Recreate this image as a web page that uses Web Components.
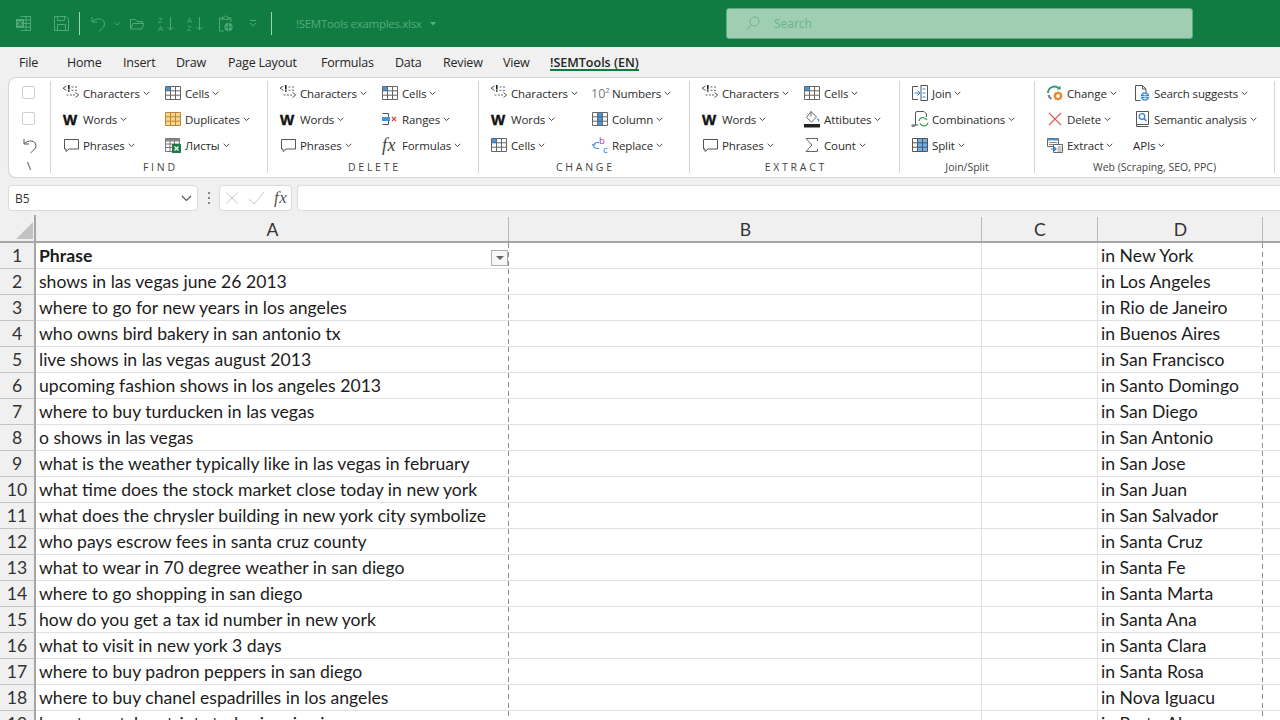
<!DOCTYPE html>
<html><head><meta charset="utf-8">
<style>
html,body{margin:0;padding:0;width:1280px;height:720px;overflow:hidden;background:#f0f0f0}
body{display:flex;flex-direction:column;font-family:"Open Sans","Noto Sans",sans-serif}
</style></head>
<body>
<x-titlebar></x-titlebar>
<x-tabs>
  <x-tab w="48" ml="19">File</x-tab><x-tab w="56">Home</x-tab><x-tab w="53">Insert</x-tab><x-tab w="52">Draw</x-tab><x-tab w="93">Page Layout</x-tab><x-tab w="74">Formulas</x-tab><x-tab w="48">Data</x-tab><x-tab w="60">Review</x-tab><x-tab w="47">View</x-tab><x-tab active>!SEMTools (EN)</x-tab>
</x-tabs>
<x-ribbon>
  <x-left></x-left>
  <x-group w="217" col="102" label="F I N D">
    <x-item icon="chars">Characters</x-item><x-item icon="grid">Cells</x-item>
    <x-item icon="w">Words</x-item><x-item icon="dup">Duplicates</x-item>
    <x-item icon="bubble">Phrases</x-item><x-item icon="sheets">Листы</x-item>
  </x-group>
  <x-group w="211" col="102" label="D E L E T E">
    <x-item icon="chars">Characters</x-item><x-item icon="grid">Cells</x-item>
    <x-item icon="w">Words</x-item><x-item icon="ranges">Ranges</x-item>
    <x-item icon="bubble">Phrases</x-item><x-item icon="fx">Formulas</x-item>
  </x-group>
  <x-group w="211" col="101" label="C H A N G E">
    <x-item icon="chars">Characters</x-item><x-item icon="ten">Numbers</x-item>
    <x-item icon="w">Words</x-item><x-item icon="column">Column</x-item>
    <x-item icon="grid">Cells</x-item><x-item icon="replace">Replace</x-item>
  </x-group>
  <x-group w="210" col="102" label="E X T R A C T">
    <x-item icon="chars">Characters</x-item><x-item icon="grid">Cells</x-item>
    <x-item icon="w">Words</x-item><x-item icon="bucket">Attibutes</x-item>
    <x-item icon="bubble">Phrases</x-item><x-item icon="sum">Count</x-item>
  </x-group>
  <x-group w="135" col="1" label="Join/Split">
    <x-item icon="join">Join</x-item><x-item icon="combo">Combinations</x-item><x-item icon="split">Split</x-item>
  </x-group>
  <x-group w="240" col="87" label="Web (Scraping, SEO, PPC)">
    <x-item icon="change">Change</x-item><x-item icon="search">Search suggests</x-item>
    <x-item icon="del">Delete</x-item><x-item icon="semantic">Semantic analysis</x-item>
    <x-item icon="extract">Extract</x-item><x-item>APIs</x-item>
  </x-group>
</x-ribbon>
<x-formula></x-formula>
<x-sheet></x-sheet>

<script>
const ICONS={
chars:`<svg viewBox="0 0 18 18"><path d="M4.500 2 1 4.200l3.500 2.200" fill="none" stroke="#555"/><path d="M6.800 1v4.500M6.800 6.300v1.400" stroke="#111" stroke-width="1.500"/><path d="M9.500 3h2M13 3h2M9.500 6.300h2M13 6.300h2M4.500 11h2M8 11h2M11 11h2" stroke="#666"/><path d="M13.500 8.500l3.200 2.500-3.200 2.500" fill="none" stroke="#555"/></svg>`,
grid:`<svg viewBox="0 0 18 18"><rect x="2" y="3" width="5" height="4" fill="#3f97e0"/><path d="M1.500 2.500h15v13h-15zM1.500 6.800h15M1.500 11.200h15M6.500 2.500v13M11.500 2.500v13" fill="none" stroke="#666"/></svg>`,
dup:`<svg viewBox="0 0 18 18"><rect x="2" y="3" width="14" height="12" fill="#fbd68d"/><path d="M1.500 2.500h15v13h-15zM1.500 6.800h15M1.500 11.200h15M6.500 2.500v13M11.500 2.500v13" fill="none" stroke="#b9873a"/></svg>`,
bubble:`<svg viewBox="0 0 18 18"><path d="M2.500 3.500h14v9.500H7l-3 2.500v-2.500H2.500z" fill="none" stroke="#555"/></svg>`,
sheets:`<svg viewBox="0 0 18 18"><path d="M1.500 2.500h14v13h-14zM1.500 8h14M1.500 11.500h14M6 5v10.500M10.500 5v10.500" fill="none" stroke="#777"/><rect x="2" y="3" width="13" height="2.500" fill="#888"/><rect x="8" y="8" width="9" height="9" fill="#1e7b45"/><path d="M10.500 10.500l4 4M14.500 10.500l-4 4" stroke="#fff" stroke-width="1.200"/></svg>`,
ranges:`<svg viewBox="0 0 18 18"><path d="M1.500 3.500h6v11h-6" fill="none" stroke="#555"/><rect x="1" y="7" width="8" height="4" fill="#3f97e0"/><path d="M11 7l4 4M15 7l-4 4" stroke="#e0443e" stroke-width="1.200"/></svg>`,
column:`<svg viewBox="0 0 18 18"><rect x="7" y="3" width="5" height="12" fill="#3f97e0"/><path d="M1.500 2.500h15v13h-15zM1.500 6.800h15M1.500 11.200h15M6.500 2.500v13M11.500 2.500v13" fill="none" stroke="#666"/></svg>`,
replace:`<svg viewBox="0 -3 18 24" style="height:24px;margin:-3px 0;overflow:visible"><text x="8" y="8" font-family="Open Sans" font-size="9.500" fill="#9b3fb0">b</text><text x="12" y="16.500" font-family="Open Sans" font-size="9.500" fill="#2d86d6">c</text><path d="M8 6.500H6Q2.500 6.500 2.500 9.500T6 12.500h2M4.500 8 2.500 9.800 1 8" fill="none" stroke="#2d86d6"/></svg>`,
bucket:`<svg viewBox="0 0 18 18"><path d="M8 1.500 13.500 7 8.500 12 3.500 7.500z" fill="#fff" stroke="#666"/><path d="M8 1.500v5" stroke="#666"/><path d="M14.500 8.500q1.500 2 1 3" fill="none" stroke="#3f97e0" stroke-width="1.500"/><rect x="1" y="14" width="16" height="3.500" fill="#222"/></svg>`,
sum:`<svg viewBox="0 0 18 18"><path d="M14.500 5V2.500H3L9 9l-6 6.500h11.500V13" fill="none" stroke="#666"/></svg>`,
join:`<svg viewBox="0 0 18 18"><path d="M7 2.500H1.500v13H7M10 1.500h6.500v15H10" fill="none" stroke="#555"/><path d="M10 1v16" stroke="#555"/><path d="M11.500 5h3M11.500 9h3M11.500 13h3" stroke="#2d86d6"/><path d="M3.500 9H9M6.500 6.500 9 9l-2.500 2.500" fill="none" stroke="#2d86d6"/></svg>`,
combo:`<svg viewBox="0 0 18 18"><path d="M6 1.500h7l2.500 2.500v3M4.500 14V3Q4.500 1.500 6 1.500M4.500 14Q4.500 16.500 2 16.500 0.800 16.500 0.800 15h6.500" fill="none" stroke="#555"/><path d="M8 11a4 4 0 0 1 7-2l1 1M17 12.500a4 4 0 0 1-7 2l-1-1" fill="none" stroke="#3aa655" stroke-width="1.300"/></svg>`,
split:`<svg viewBox="0 0 18 18"><rect x="6" y="3" width="10" height="12" fill="#69b1ea"/><path d="M1.500 2.500h15v13h-15zM1.500 6.800h15M1.500 11.200h15M6.500 2.500v13M11.500 2.500v13" fill="none" stroke="#555"/></svg>`,
change:`<svg viewBox="0 0 18 18"><path d="M2 9a6.500 6.500 0 0 1 11-4.500" fill="none" stroke="#3f9a8a" stroke-width="2"/><path d="M11 6l4-1-1-3.500z" fill="#3f9a8a"/><path d="M2.500 11a6.500 6.500 0 0 0 3 4" fill="none" stroke="#777" stroke-width="2"/><circle cx="12" cy="12" r="3" fill="none" stroke="#e58a2c" stroke-width="2.200"/><path d="M12 7.500v2M12 14.500v2M7.500 12h2M14.500 12h2M8.800 8.800l1.400 1.400M13.800 13.800l1.400 1.400M15.200 8.800l-1.400 1.400M10.200 13.800l-1.400 1.400" stroke="#e58a2c" stroke-width="1.500"/></svg>`,
del:`<svg viewBox="0 0 18 18"><path d="M3 3l12 12M15 3 3 15" stroke="#e4564e" stroke-width="1.100"/></svg>`,
extract:`<svg viewBox="0 0 18 18"><path d="M1.500 2.500h11v8h-11z" fill="#fff" stroke="#666"/><rect x="1.500" y="2.500" width="11" height="2" fill="#4a90c8"/><path d="M3 6.500h8M3 8.500h5" stroke="#888"/><path d="M7.500 8.500h9v8h-9z" fill="#fff" stroke="#666"/><path d="M11.500 11h4M11.500 13h4M11.500 15h4" stroke="#888"/><path d="M5 13h5M8 11l2 2-2 2" fill="none" stroke="#2d86d6" stroke-width="1.200"/></svg>`,
search:`<svg viewBox="0 0 18 18"><path d="M2.500 1.500h7l3.500 3.500v4M9.500 1.500v3.500H13M2.500 1.500v15h5" fill="none" stroke="#555"/><circle cx="12" cy="12.500" r="4.200" fill="#2d86d6"/><path d="M8 12.500h8M12 8.500v8M9.500 10.500h5M9.500 14.500h5" stroke="#fff" stroke-width=".7"/></svg>`,
semantic:`<svg viewBox="0 0 18 18"><path d="M3.500 14.500V1.500h12v13zM3.500 14.500v2h12" fill="none" stroke="#555"/><circle cx="9" cy="6.500" r="2.800" fill="none" stroke="#2d86d6" stroke-width="1.300"/><path d="M11 8.500l2.500 2.500" stroke="#2d86d6" stroke-width="1.500"/></svg>`
};
const CHEV=`<svg width="7" height="5" viewBox="0 0 7 5" style="display:block"><path d="M.7.8 3.500 3.600 6.300.8" fill="none" stroke="#444"/></svg>`;

class XBase extends HTMLElement{
  constructor(){super();this.attachShadow({mode:'open'});}
}
const SORT=(a,b)=>`<svg width="17" height="17" viewBox="0 0 17 17" fill="none" stroke="#4fa878" style="overflow:visible"><text x="0" y="7.500" font-size="8" font-family="Open Sans" fill="#4fa878" stroke="none">${a}</text><text x="0" y="16" font-size="8" font-family="Open Sans" fill="#4fa878" stroke="none">${b}</text><path d="M12.500 2v13M9.500 12l3 3 3-3"/></svg>`;
customElements.define('x-titlebar',class extends XBase{connectedCallback(){this.shadowRoot.innerHTML=`
<style>
:host{display:flex;align-items:center;height:47px;background:#107c41;flex:none;color:#5aae84;font-family:"Open Sans",sans-serif}
svg{display:block;flex:none}
.sep{width:1px;height:23px;background:#9fd3b6;flex:none}
.title{font-size:11.500px;letter-spacing:-.3px;color:#55a97f;white-space:nowrap;width:127px;flex:none}
.search{margin-left:290px;width:467px;height:31px;box-sizing:border-box;background:#9fceb3;border:1px solid #5cab82;border-radius:3px;display:flex;align-items:center;padding-left:19px;gap:14px;font:12px "Noto Sans",sans-serif;color:#6eb58f;flex:none}
.m{margin-left:12px}
</style>
<svg style="margin-left:15px" width="17" height="17" viewBox="0 0 17 17" fill="none" stroke="#4fa878"><path d="M5.500 1.500h10v14h-10"/><path d="M8 5h7M8 8.500h7M8 12h7M11 1.500v14"/><rect x="1" y="4" width="8" height="9" fill="#4fa878" stroke="none"/><path d="M3 6l4 5M7 6l-4 5" stroke="#107c41" stroke-width="1.200"/></svg>
<svg style="margin-left:21px" width="17" height="17" viewBox="0 0 17 17" fill="none" stroke="#4fa878"><path d="M1.500 1.500h11.500l2.500 2.500v11.500h-14z"/><path d="M4.500 1.500v4h7v-4M4.500 15.500v-6h8v6"/></svg>
<div class="sep" style="margin-left:9px"></div>
<svg style="margin-left:11px" width="15" height="17" viewBox="0 0 15 17" fill="none" stroke="#4fa878"><path d="M1 2v5h5M1.500 6.500C5 2.500 13.500 3 13.500 9c0 3-2.500 4.500-5.500 7"/></svg>
<svg style="margin-left:8px" width="6" height="4" viewBox="0 0 6 4" fill="none" stroke="#4fa878"><path d="M.5.500 3 3 5.500.500"/></svg>
<svg style="margin-left:9px" width="16" height="12" viewBox="0 0 16 12" fill="none" stroke="#4fa878"><path d="M1.500 11V1.500h5l1.500 2h5.500v2M1.500 11h11l2.500-5.500H4z"/></svg>
<span style="margin-left:13px;display:block">${SORT('Z','A')}</span>
<span class="m" style="display:block">${SORT('A','Z')}</span>
<svg style="margin-left:14px" width="16" height="17" viewBox="0 0 16 17" fill="none" stroke="#4fa878"><path d="M5 3H1.500v13H6M10 3h3v4M4 4.500V2.500h2a1.500 1.500 0 0 1 3 0h2v2z"/><circle cx="10.500" cy="12" r="4.300" fill="#4fa878" stroke="none"/><path d="M6.500 12h8M10.500 8v8" stroke="#107c41" stroke-width=".8"/></svg>
<svg style="margin-left:15px" width="8" height="7" viewBox="0 0 8 7" fill="none" stroke="#4fa878"><path d="M1 .5h6M1 3l3 3 3-3"/></svg>
<div class="sep" style="margin-left:14px"></div>
<div class="title" style="margin-left:24px">!SEMTools examples.xlsx</div>
<svg style="margin-left:7px" width="6" height="4" viewBox="0 0 6 4"><path d="M0 0h6L3 3.500z" fill="#5aae84"/></svg>
<div class="search"><svg width="14" height="15" viewBox="0 0 14 15" fill="none" stroke="#6eb58f"><circle cx="8.500" cy="5.500" r="4.500"/><path d="M5.300 8.700.8 14"/></svg><span>Search</span></div>`;}});

customElements.define('x-tabs',class extends XBase{connectedCallback(){this.shadowRoot.innerHTML=`
<style>:host{display:flex;height:30px;flex:none;align-items:stretch;background:#f0f0f0;font:12.500px "Open Sans",sans-serif;color:#262626}</style><slot></slot>`;}});
customElements.define('x-tab',class extends XBase{connectedCallback(){
  const w=this.getAttribute('w'),ml=this.getAttribute('ml'),a=this.hasAttribute('active');
  this.shadowRoot.innerHTML=`<style>
:host{display:flex;align-items:center;position:relative;box-sizing:border-box;white-space:nowrap;letter-spacing:${a?'0':'-.2px'};${w?`width:${w}px;`:''}${ml?`margin-left:${ml}px;`:''}${a?'font-weight:600;':''}}
.u{position:absolute;left:0;right:0;bottom:6px;height:2px;background:#107c41}
</style><slot></slot>${a?'<div class="u"></div>':''}`;}});

customElements.define('x-ribbon',class extends XBase{connectedCallback(){this.shadowRoot.innerHTML=`
<style>:host{display:flex;flex:none;height:101px;box-sizing:border-box;margin-left:8px;background:#fff;border:1px solid #d6d6d6;border-right:0;border-radius:8px 0 0 8px;padding-top:1px;box-shadow:0 1px 1px #e2e2e2;font:11.500px "Open Sans",sans-serif;color:#2b2b2b}</style><slot></slot>`;}});

customElements.define('x-left',class extends XBase{connectedCallback(){this.shadowRoot.innerHTML=`
<style>:host{display:flex;flex-direction:column;align-items:center;width:42px;box-sizing:border-box;flex:none;height:92px;border-right:1px solid #d4d4d4;margin-top:2px}
.c{width:13px;height:13px;box-sizing:border-box;border:1px solid #cfcfcf;border-radius:2px;margin-top:5px;margin-bottom:8px;margin-left:-3px}
svg{display:block;margin-top:3px;margin-left:0}
.s{font-size:11px;margin-top:4px;color:#444;margin-left:-1px}</style>
<div class="c"></div><div class="c"></div>
<svg width="16" height="18" viewBox="0 0 16 18" fill="none" stroke="#555"><path d="M2 3v5h5M2.500 7.500C6 3.500 14 4 14 10c0 3-3 4.500-5.500 7"/></svg>
<div class="s">\\</div>`;}});

customElements.define('x-group',class extends XBase{connectedCallback(){
  const w=+this.getAttribute('w'),col=this.getAttribute('col'),label=this.getAttribute('label');
  this.shadowRoot.innerHTML=`<style>
:host{display:flex;flex-direction:column;flex:none;width:${w}px;box-sizing:border-box;height:92px;margin-top:2px;border-right:1px solid #d4d4d4;padding-left:11px}
.g{display:grid;grid-template-rows:repeat(3,26px);grid-auto-flow:${col==='1'?'column':'row'};grid-template-columns:${col==='1'?'auto':col+'px auto'};justify-content:start;flex:none;margin-top:-1px}
.l{text-align:center;font-size:10.500px;line-height:18px;margin-left:-11px;color:#444}
</style><div class="g"><slot></slot></div><div class="l">${label}</div>`;}});

customElements.define('x-item',class extends XBase{connectedCallback(){
  const i=this.getAttribute('icon');let ic='';
  if(i==='w')ic=`<span class="w">W</span>`;
  else if(i==='fx')ic=`<span class="fx">fx</span>`;
  else if(i==='ten')ic=`<span class="ten">10<sup>2</sup></span>`;
  else if(i)ic=ICONS[i];
  this.shadowRoot.innerHTML=`<style>
:host{display:flex;align-items:center;white-space:nowrap;height:26px;letter-spacing:-.12px}
.i{width:21px;height:18px;flex:none;display:flex;align-items:center}
.i svg{width:18px;height:18px;display:block}
.w{font:bold 15px "Liberation Sans",sans-serif;color:#111;letter-spacing:-.5px;margin-left:1px;-webkit-text-stroke:.4px #111}
.fx{font:italic 18px "Liberation Serif",serif;color:#444;margin-left:1px;letter-spacing:.5px}
.ten{font:12.500px "Open Sans",sans-serif;color:#777;letter-spacing:0}
.ten sup{font-size:8px;line-height:0;vertical-align:5px}
.ch{margin-left:3px;flex:none}
</style>${i?`<div class="i">${ic}</div>`:''}<slot></slot><span class="ch">${CHEV}</span>`;}});

customElements.define('x-formula',class extends XBase{connectedCallback(){this.shadowRoot.innerHTML=`
<style>
:host{display:flex;flex:none;align-items:flex-start;height:33px;padding:7px 0 0 8px;box-sizing:border-box;background:#f0f0f0;font:12px "Open Sans",sans-serif;color:#333}
.b{height:26px;box-sizing:border-box;background:#fff;border:1px solid #dcdcdc;border-radius:4px;display:flex;align-items:center}
.n{width:190px;padding:0 5px 0 6px;justify-content:space-between}
.d{width:21px;display:flex;flex-direction:column;gap:3px;align-items:center;padding-top:7px}
.d i{width:2px;height:2px;background:#888;display:block}
.f{width:73px;gap:6px;padding-left:5px;box-sizing:border-box}
.fx{font:italic 17px "Liberation Serif",serif;color:#555;letter-spacing:.5px;margin-left:3px}
.in{flex:1;margin-left:5px;border-right:0;border-radius:4px 0 0 4px}
svg{display:block;flex:none}
</style>
<div class="b n"><span>B5</span><svg width="11" height="7" viewBox="0 0 11 7" fill="none" stroke="#555"><path d="M1 1l4.500 4.500L10 1" stroke-width="1.200"/></svg></div>
<div class="d"><i></i><i></i><i></i></div>
<div class="b f"><svg width="14" height="14" viewBox="0 0 14 14" stroke="#c8c8c8" fill="none"><path d="M1.500 1.500l11 11M12.500 1.500l-11 11"/></svg><svg width="17" height="14" viewBox="0 0 17 14" stroke="#c8c8c8" fill="none" style="margin-left:3px"><path d="M1 8l5 5L16 1"/></svg><span class="fx">fx</span></div>
<div class="b in"></div>`;}});

const A=["shows in las vegas june 26 2013","where to go for new years in los angeles","who owns bird bakery in san antonio tx","live shows in las vegas august 2013","upcoming fashion shows in los angeles 2013","where to buy turducken in las vegas","o shows in las vegas","what is the weather typically like in las vegas in february","what time does the stock market close today in new york","what does the chrysler building in new york city symbolize","who pays escrow fees in santa cruz county","what to wear in 70 degree weather in san diego","where to go shopping in san diego","how do you get a tax id number in new york","what to visit in new york 3 days","where to buy padron peppers in san diego","where to buy chanel espadrilles in los angeles","how to watch patriots today in miami"];
const D=["in New York","in Los Angeles","in Rio de Janeiro","in Buenos Aires","in San Francisco","in Santo Domingo","in San Diego","in San Antonio","in San Jose","in San Juan","in San Salvador","in Santa Cruz","in Santa Fe","in Santa Marta","in Santa Ana","in Santa Clara","in Santa Rosa","in Nova Iguacu","in Porto Alegre"];
customElements.define('x-sheet',class extends XBase{connectedCallback(){
  let h=`<div class="corner"><svg width="17" height="17" viewBox="0 0 17 17"><path d="M17 0v17H0z" fill="#c2c2c2"/></svg></div>`;
  for(const c of ['A','B','C','D'])h+=`<div class="ch">${c}</div>`;
  h+=`<div class="ch last"></div>`;
  const rows=[['<b>Phrase</b><span class="flt"><i></i></span>','in New York'],...A.map((a,i)=>[a,D[i+1]])];
  rows.forEach((r,i)=>{h+=`<div class="rh">${i+1}</div><div class="c dash">${r[0]}</div><div class="c"></div><div class="c"></div><div class="c dash">${r[1]}</div><div class="c e"></div>`;});
  this.shadowRoot.innerHTML=`<style>
:host{display:grid;flex:1;min-height:0;overflow:hidden;background:#fff;grid-template-columns:36px 473px 473px 116px 165px 1fr;grid-auto-rows:26px;grid-template-rows:32px;font:17.600px Lato,sans-serif;color:#1c1c1c}
.corner{background:#f0f0f0 linear-gradient(#a6a6a6,#a6a6a6) right bottom/2px 26px no-repeat;border-bottom:2px solid #a6a6a6;box-sizing:border-box;display:flex;justify-content:flex-end;align-items:flex-end;padding:0 3px 2px 0}
svg{display:block}
.ch{background:#f0f0f0 linear-gradient(#b8b8b8,#b8b8b8) right bottom/1px 24px no-repeat;border-bottom:2px solid #a6a6a6;box-sizing:border-box;display:flex;align-items:flex-end;justify-content:center;line-height:22px;color:#333}
.ch.last{background-image:none}
.rh{background:#f0f0f0;border-bottom:1px solid #c4c4c4;border-right:2px solid #a6a6a6;box-sizing:border-box;text-align:center;line-height:26px;color:#333}
.c{box-sizing:border-box;border-bottom:1px solid #e1e1e1;border-right:1px solid #e1e1e1;padding-left:3px;line-height:26px;white-space:nowrap;overflow:hidden;position:relative}
.dash{border-right:0;padding-right:1px;background:linear-gradient(#8f8f8f 0 5px,transparent 5px 9px,#8f8f8f 9px 14px,transparent 14px 18px,#8f8f8f 18px 23px,transparent 23px) right top/1px 26px repeat-y}
.e{border-right:0}
.flt{position:absolute;right:1px;top:7px;width:17px;height:16px;box-sizing:border-box;border:1px solid #b0b0b0;background:#f7f7f7;display:flex;align-items:center;justify-content:center}
.flt i{width:0;height:0;border:4px solid transparent;border-top:4px solid #666;border-bottom:0;display:block}
</style>${h}`;}});
</script>
</body></html>
